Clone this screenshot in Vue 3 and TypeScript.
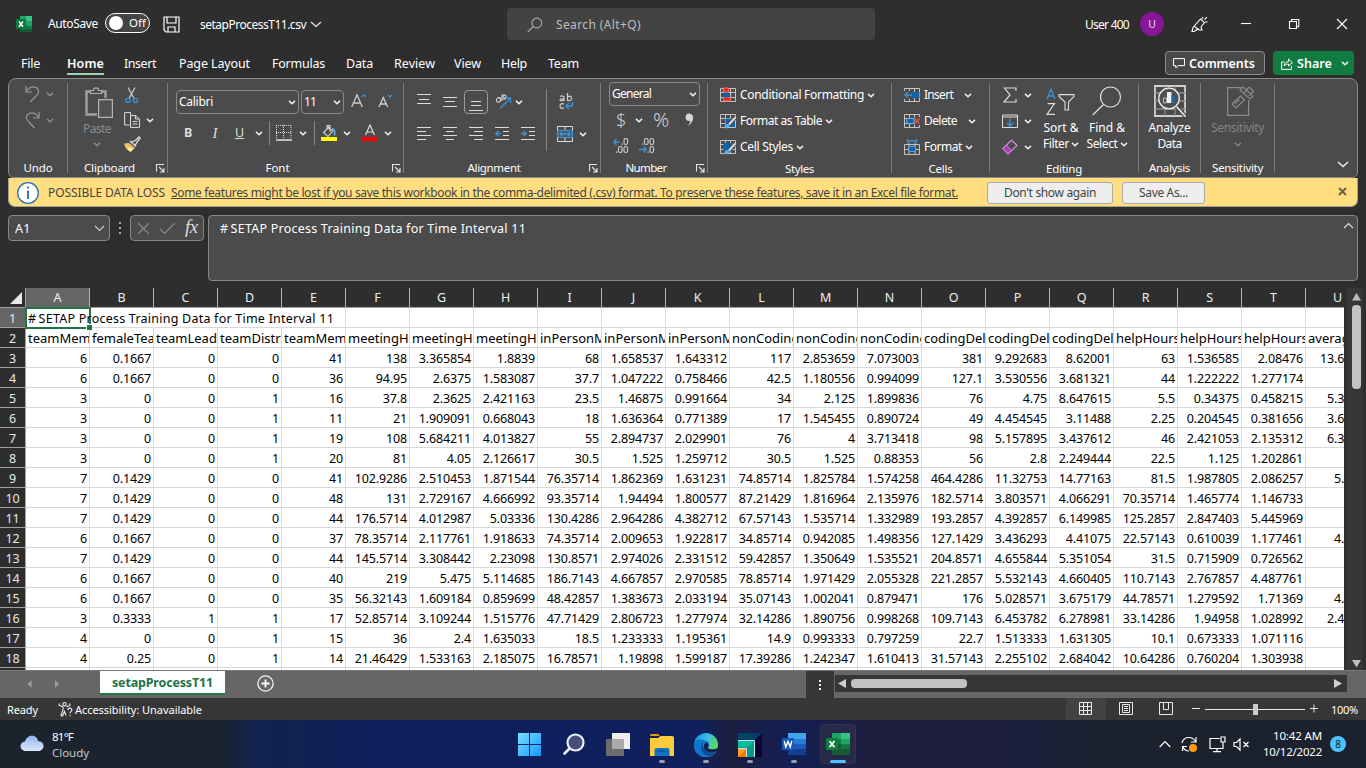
<script setup lang="ts">
import type { Directive } from 'vue'

// Tracks a label so that it fills the given width in pixels.
const vFit: Directive<HTMLElement, number> = {
  mounted(el, { value }) {
    el.style.letterSpacing = '0'
    const range = document.createRange()
    range.selectNodeContents(el)
    const width = range.getBoundingClientRect().width
    const count = (el.textContent ?? '').trim().length
    if (count > 0) el.style.letterSpacing = `${((value - width) / count).toFixed(3)}px`
  },
}

const tabs: { name: string; w: number; gap: number }[] = [
  { name: 'File', w: 19, gap: 21 },
  { name: 'Home', w: 37, gap: 27 },
  { name: 'Insert', w: 32, gap: 20 },
  { name: 'Page Layout', w: 71, gap: 23 },
  { name: 'Formulas', w: 53, gap: 22 },
  { name: 'Data', w: 27, gap: 21 },
  { name: 'Review', w: 41, gap: 21 },
  { name: 'View', w: 27, gap: 19 },
  { name: 'Help', w: 26, gap: 20 },
  { name: 'Team', w: 31, gap: 21 },
]

const columns = 'ABCDEFGHIJKLMNOPQRSTU'.split('')

const headings = [
  'teamMem', 'femaleTea', 'teamLead', 'teamDistr', 'teamMem', 'meetingH', 'meetingH', 'meetingH',
  'inPersonM', 'inPersonM', 'inPersonM', 'nonCoding', 'nonCoding', 'nonCoding', 'codingDel',
  'codingDel', 'codingDel', 'helpHours', 'helpHours', 'helpHours', 'averag',
]

const rows: string[][] = [
  '6 0.1667 0 0 41 138 3.365854 1.8839 68 1.658537 1.643312 117 2.853659 7.073003 381 9.292683 8.62001 63 1.536585 2.08476 13.6',
  '6 0.1667 0 0 36 94.95 2.6375 1.583087 37.7 1.047222 0.758466 42.5 1.180556 0.994099 127.1 3.530556 3.681321 44 1.222222 1.277174',
  '3 0 0 1 16 37.8 2.3625 2.421163 23.5 1.46875 0.991664 34 2.125 1.899836 76 4.75 8.647615 5.5 0.34375 0.458215 5.3',
  '3 0 0 1 11 21 1.909091 0.668043 18 1.636364 0.771389 17 1.545455 0.890724 49 4.454545 3.11488 2.25 0.204545 0.381656 3.6',
  '3 0 0 1 19 108 5.684211 4.013827 55 2.894737 2.029901 76 4 3.713418 98 5.157895 3.437612 46 2.421053 2.135312 6.3',
  '3 0 0 1 20 81 4.05 2.126617 30.5 1.525 1.259712 30.5 1.525 0.88353 56 2.8 2.249444 22.5 1.125 1.202861',
  '7 0.1429 0 0 41 102.9286 2.510453 1.871544 76.35714 1.862369 1.631231 74.85714 1.825784 1.574258 464.4286 11.32753 14.77163 81.5 1.987805 2.086257 5.',
  '7 0.1429 0 0 48 131 2.729167 4.666992 93.35714 1.94494 1.800577 87.21429 1.816964 2.135976 182.5714 3.803571 4.066291 70.35714 1.465774 1.146733',
  '7 0.1429 0 0 44 176.5714 4.012987 5.03336 130.4286 2.964286 4.382712 67.57143 1.535714 1.332989 193.2857 4.392857 6.149985 125.2857 2.847403 5.445969',
  '6 0.1667 0 0 37 78.35714 2.117761 1.918633 74.35714 2.009653 1.922817 34.85714 0.942085 1.498356 127.1429 3.436293 4.41075 22.57143 0.610039 1.177461 4.',
  '7 0.1429 0 0 44 145.5714 3.308442 2.23098 130.8571 2.974026 2.331512 59.42857 1.350649 1.535521 204.8571 4.655844 5.351054 31.5 0.715909 0.726562',
  '6 0.1667 0 0 40 219 5.475 5.114685 186.7143 4.667857 2.970585 78.85714 1.971429 2.055328 221.2857 5.532143 4.660405 110.7143 2.767857 4.487761',
  '6 0.1667 0 0 35 56.32143 1.609184 0.859699 48.42857 1.383673 2.033194 35.07143 1.002041 0.879471 176 5.028571 3.675179 44.78571 1.279592 1.71369 4.',
  '3 0.3333 1 1 17 52.85714 3.109244 1.515776 47.71429 2.806723 1.277974 32.14286 1.890756 0.998268 109.7143 6.453782 6.278981 33.14286 1.94958 1.028992 2.4',
  '4 0 0 1 15 36 2.4 1.635033 18.5 1.233333 1.195361 14.9 0.993333 0.797259 22.7 1.513333 1.631305 10.1 0.673333 1.071116',
  '4 0.25 0 1 14 21.46429 1.533163 2.185075 16.78571 1.19898 1.599187 17.39286 1.242347 1.610413 31.57143 2.255102 2.684042 10.64286 0.760204 1.303938',
].map((line) => line.split(' '))

// The last column runs past the right edge of the sheet, so its values start at a digit offset.
const lastColumnInset = (text: string): string => `${42 - 7 * text.length}px`
</script>

<template>
  <div class="desktop">
    <svg class="defs" width="0" height="0">
      <symbol id="chev" viewBox="0 0 8 5"><path d="M1 .9L4 3.700L7 .9" fill="none" stroke="currentColor" stroke-width="1.500" /></symbol>
      <symbol id="launch" viewBox="0 0 9 9"><path d="M.5 7.500V.5H8M3 3l4.500 4.500M8 4v4H4" fill="none" stroke="#e8e8e8" stroke-width="1.100" /></symbol>
      <symbol id="minigrid" viewBox="0 0 16 16"><path d="M.5 1.500h15v13H.5zM5.500 1.500v13M10.500 1.500v13M.5 5.500h15M.5 10.500h15" fill="none" stroke="#c4c4c4" /></symbol>
    </svg>

    <header class="title">
      <svg class="xl" viewBox="0 0 16 16"><path d="M4 0h6v5H4z" fill="#21a366" /><path d="M10 0h6v5h-6z" fill="#33c481" /><path d="M4 5h6v6H4z" fill="#107c41" /><path d="M10 5h6v5h-6z" fill="#21a366" /><path d="M4 10h12v6H4z" fill="#185c37" /><path d="M10 10h6v3h-6z" fill="#107c41" /><rect y="3" width="10" height="10" rx="1" fill="#0f7a40" /><path d="M3 5.500l4 5.200M7 5.500l-4 5.200" stroke="#fff" stroke-width="1.400" /></svg>
      <span v-fit="50" class="autosave">AutoSave</span>
      <span class="toggle"><i></i><span v-fit="17">Off</span></span>
      <svg class="save" viewBox="0 0 17 17"><path d="M1 1h15v15H3L1 14zM4 1v6h9V1M5 16v-5h7v5" fill="none" stroke="#fff" stroke-width="1.200" /></svg>
      <span v-fit="106" class="doc">setapProcessT11.csv</span>
      <svg class="docchev" viewBox="0 0 12 7"><path d="M1 1l5 4.500L11 1" fill="none" stroke="#eee" stroke-width="1.200" /></svg>
      <div class="search">
        <svg viewBox="0 0 16 16"><circle cx="9.800" cy="6" r="4.900" /><path d="M6.200 9.500L.8 15" /></svg>
        <span v-fit="85">Search (Alt+Q)</span>
      </div>
      <span v-fit="44" class="user">User 400</span>
      <span class="avatar">U</span>
      <svg class="pen" viewBox="0 0 17 17"><path d="M1 15.500l1-4L9.500 3l4 3.500L10 11l1 3H8.500L7 13l-4 2.500zM3.500 10.500l4 3M11 3l1-2M13.500 3.500L16 1.200M14 6h2.500" fill="none" stroke="#fff" stroke-width="1.100" /></svg>
      <svg class="win" viewBox="0 0 102 12"><path d="M0 5.500h10" /><path d="M48.500 3.500h7v7h-7zM50.500 3.500v-2h7.300v7.300h-2" /><path d="M96 1l10 10M106 1L96 11" /></svg>
    </header>

    <nav class="tabs">
      <span v-for="t in tabs" :key="t.name" class="tab" :class="{ on: t.name === 'Home' }" :style="{ width: t.w + 'px', marginLeft: t.gap + 'px' }"><span v-fit="t.w">{{ t.name }}</span></span>
      <div class="comments">
        <svg viewBox="0 0 12 11"><path d="M.5.600h11v7H5L2.800 10V7.600H.5z" fill="none" stroke="#fff" /></svg>
        <span v-fit="66">Comments</span>
      </div>
      <div class="share">
        <svg viewBox="0 0 12 12"><path d="M3.500 4H.6v7.400h9.800V8M3 8c.5-3 2-4.300 4.500-4.300V1L11.400 4.700 7.500 8V6C5.600 6 4.400 6.500 3 8z" fill="none" stroke="#fff" /></svg>
        <span v-fit="35">Share</span>
        <svg class="chev"><use href="#chev" /></svg>
      </div>
    </nav>

    <section class="ribbon">
      <div class="group undo">
        <div class="line dim"><svg class="i16" viewBox="0 0 16 18"><path d="M1 1v6h6M1 6.500C4 2.500 8 1 11 2.500c4 2 3 6 0 8.500l-6 6" fill="none" stroke="currentColor" stroke-width="1.200" /></svg><svg class="chev"><use href="#chev" /></svg></div>
        <div class="line dim"><svg class="i16" viewBox="0 0 16 18"><path d="M14 1v6H8M14 6.500C11 2.500 7 1 4 2.500c-4 2-3 6 0 8.500l5.500 6" fill="none" stroke="currentColor" stroke-width="1.200" /></svg><svg class="chev"><use href="#chev" /></svg></div>
        <div class="label"><span v-fit="29">Undo</span></div>
      </div><i class="sep"></i>

      <div class="group clip">
        <div class="cols">
          <div class="big paste">
            <svg width="28" height="31" viewBox="0 0 28 31"><path d="M12 27.500H1.500v-23H6M16 4.500h4.500V11" fill="none" stroke="#a0a0a0" stroke-width="2.400" /><path d="M5.500 6.500v-3h3C8.500 0 13.500 0 13.500 3.500h3v3z" fill="none" stroke="#b0b0b0" stroke-width="1.200" /><path d="M13.600 12.600h13.800v17.800H13.600z" fill="#525252" stroke="#b4b4b4" stroke-width="1.200" /></svg>
            <span v-fit="28">Paste</span><svg class="chev"><use href="#chev" /></svg>
          </div>
          <div class="side">
            <svg class="cut" width="14" height="17" viewBox="0 0 14 17"><path d="M3 .5l6 11M10 .5L4 11.500" stroke="#d0d0d0" stroke-width="1.200" /><g fill="none" stroke="#3c92d6" stroke-width="1.400"><circle cx="3" cy="13.500" r="2.100" /><circle cx="10.500" cy="13.500" r="2.100" /></g></svg>
            <div class="copyrow"><svg width="16" height="16" viewBox="0 0 16 16"><path d="M5.500 13H.6V.6h6v3" fill="none" stroke="#ddd" /><path d="M6.500 3.600h5l4 3.500v8.300h-9zM11.500 3.600V7h4M8.500 9.500h5M8.500 12h5" fill="none" stroke="#ddd" /></svg><svg class="chev"><use href="#chev" /></svg></div>
            <svg width="17" height="16" viewBox="0 0 17 16"><path d="M0 7.500L5 7l6 5-4.500 4C3.500 14.500 1 12 0 7.500z" fill="#efbe67" /><path d="M3 11l6 2-2.500 3z" fill="#fff1bf" /><path d="M6 5l6 5.500M7.500 6l4-1.500L15 1l1.200 1.300L13 6l-1.500 3" fill="none" stroke="#e5e5e5" stroke-width="1.300" /></svg>
          </div>
        </div>
        <div class="label wide"><span v-fit="51">Clipboard</span><svg class="launch"><use href="#launch" /></svg></div>
      </div><i class="sep"></i>

      <div class="group font">
        <div class="frow">
          <div class="combo w123"><span v-fit="34">Calibri</span><svg class="chev"><use href="#chev" /></svg></div>
          <div class="combo w43"><span v-fit="12">11</span><svg class="chev"><use href="#chev" /></svg></div>
          <svg class="grow" width="45" height="15" viewBox="0 0 45 15"><g fill="none" stroke="#d0d0d0" stroke-width="1.300"><path d="M.7 13L6 .8 11.300 13M2.600 9h6.800M28 13l4.300-9.500L36.600 13M29.700 10h5.200" /></g><path d="M11 2.800L13 .8l2 2M37 1l2 2 2-2" fill="none" stroke="#3c92d6" stroke-width="1.300" /></svg>
        </div>
        <div class="frow2">
          <b class="fb">B</b><i class="fi">I</i><u class="fu">U</u><svg class="chev c1"><use href="#chev" /></svg><i class="vs"></i>
          <svg class="bord" width="16" height="16" viewBox="0 0 16 16"><path d="M0 .5h16M0 7.500h16M.5 0v14M7.500 0v14M15 0v14" stroke="#ddd" stroke-dasharray="1 1" /><path d="M0 15h16" stroke="#fff" stroke-width="1.300" /></svg><svg class="chev c2"><use href="#chev" /></svg><i class="vs"></i>
          <svg class="buck" width="16" height="16" viewBox="0 0 16 16"><path d="M8 2L2.500 7.500 7 11.500 12 6 7.500 2M6 5V.6h3V7" fill="none" stroke="#d5d5d5" stroke-width="1.100" /><path d="M11 3.500c3 .5 3 4 2.500 7" fill="none" stroke="#5ea8e0" stroke-width="1.700" /><path d="M0 12h16v4H0z" fill="#ff0" /></svg><svg class="chev c3"><use href="#chev" /></svg>
          <svg class="fcol" width="16" height="16" viewBox="0 0 16 16"><path d="M3.500 10L8 0l4.500 10M5.200 7h5.600" fill="none" stroke="#ddd" stroke-width="1.200" /><path d="M0 12h16v4H0z" fill="#f00" /></svg><svg class="chev c3"><use href="#chev" /></svg>
        </div>
        <div class="label wide"><span v-fit="24">Font</span><svg class="launch"><use href="#launch" /></svg></div>
      </div><i class="sep"></i>

      <div class="group align">
        <div class="cols">
          <div class="al">
            <div class="arow">
              <svg width="14" height="24" viewBox="0 0 14 24"><path d="M0 4.500h14M2 9.500h10M0 13.500h14" /></svg>
              <svg width="14" height="24" viewBox="0 0 14 24"><path d="M0 7.500h14M2 11.500h10M0 16.500h14" /></svg>
              <span class="picked"><svg width="14" height="24" viewBox="0 0 14 24"><path d="M2 11.500h10M2 15.500h10M0 20.500h14" /></svg></span>
              <svg class="orient" width="17" height="17" viewBox="0 0 17 17"><g fill="none" stroke="#cfcfcf" stroke-width="1.200"><ellipse cx="3.500" cy="7" rx="2.300" ry="2" transform="rotate(-45 3.500 7)" /><path d="M4.500 4l3 4M6.500 1.500l4 5" /><ellipse cx="9" cy="4" rx="2.200" ry="2" transform="rotate(-45 9 4)" /></g><path d="M5 15.500L15 5.500M10.500 5h5v5" stroke="#3c92d6" stroke-width="1.400" fill="none" /></svg>
              <svg class="chev"><use href="#chev" /></svg>
            </div>
            <div class="arow two">
              <svg width="14" height="14" viewBox="0 0 14 14"><path d="M0 .5h14M0 4.500h9M0 8.500h14M0 12.500h9" /></svg>
              <svg width="14" height="14" viewBox="0 0 14 14"><path d="M0 .5h14M3 4.500h8M0 8.500h14M3 12.500h8" /></svg>
              <svg width="14" height="14" viewBox="0 0 14 14"><path d="M0 .5h14M5 4.500h9M0 8.500h14M5 12.500h9" /></svg>
              <svg width="14" height="14" viewBox="0 0 14 14"><path d="M0 .5h14M8 4.500h6M8 8.500h6M0 12.500h14" /><path d="M6 6.500H.8M3.500 4L.8 6.500 3.500 9" class="bl" /></svg>
              <svg width="14" height="14" viewBox="0 0 14 14"><path d="M0 .5h14M8 4.500h6M8 8.500h6M0 12.500h14" /><path d="M0 6.500h5.200M2.500 4l2.700 2.500L2.500 9" class="bl" /></svg>
            </div>
          </div>
          <i class="vs tall"></i>
          <div class="wraps">
            <svg width="16" height="17" viewBox="0 0 16 17"><g fill="none" stroke="#cfcfcf" stroke-width="1.200"><path d="M1 3.500C3 2.500 5 3 5 4.500V8M5 5.500C2 5.500 1 6 1 7s2 1.400 4-.5M8.500 0v8M8.500 4.500c1-2 4-2 4 .8S9.500 8.500 8.500 6.500M5 11.200C3 10 1 11 1 13s2 3 4 1.800" /></g><path d="M13.500 9v4H7.500M10 10l-3 3 3 3" class="bl" /></svg>
            <div class="mrow"><svg width="16" height="16" viewBox="0 0 16 16"><path d="M.5.500h15v15H.5zM8 0v4M8 12v4" /><path d="M.7 4.500h14.600v7H.7z" class="box" /><path d="M3 8h10M5 6L3 8l2 2M11 6l2 2-2 2" class="bl" /></svg><svg class="chev"><use href="#chev" /></svg></div>
          </div>
        </div>
        <div class="label wide"><span v-fit="53">Alignment</span><svg class="launch"><use href="#launch" /></svg></div>
      </div><i class="sep"></i>

      <div class="group num">
        <div class="combo w91"><span v-fit="39">General</span><svg class="chev"><use href="#chev" /></svg></div>
        <div class="nrow"><span class="dol">$</span><svg class="chev"><use href="#chev" /></svg><span class="pct">%</span><svg class="comma" width="9" height="14" viewBox="0 0 9 14"><path d="M4 .5c6 0 5.500 9-1.500 12.500C4.500 11 5 9.500 5 8 2 8.500.5 6.500.5 4.300S2 .5 4 .5z" fill="#d5d5d5" /></svg></div>
        <div class="drow">
          <svg width="16" height="17" viewBox="0 0 16 17"><path d="M6.500 5H.8M3.500 2L.8 5l2.700 3" class="bl" /><g class="zr"><rect x="11" y="1.500" width="3.600" height="6" rx="1.800" /><rect x="5.500" y="9.500" width="3.600" height="6" rx="1.800" /><rect x="11" y="9.500" width="3.600" height="6" rx="1.800" /></g><path d="M8.500 6.500h1.200v1.200H8.500zM3 14.500h1.200v1.200H3z" fill="#ddd" /></svg>
          <svg width="16" height="17" viewBox="0 0 16 17"><path d="M0 12.500h7.200M4.500 9.500l2.700 3-2.700 3" class="bl" /><g class="zr"><rect x="5.500" y="1.500" width="3.600" height="6" rx="1.800" /><rect x="11" y="1.500" width="3.600" height="6" rx="1.800" /><rect x="11" y="9.500" width="3.600" height="6" rx="1.800" /></g><path d="M3 6.500h1.200v1.200H3zM8.500 14.500h1.200v1.200H8.500z" fill="#ddd" /></svg>
        </div>
        <div class="label wide"><span v-fit="41">Number</span><svg class="launch"><use href="#launch" /></svg></div>
      </div><i class="sep"></i>

      <div class="group list">
        <div class="line"><svg class="ic" viewBox="0 0 16 16"><use href="#minigrid" /><path d="M3.500 1h5v4h-5zM3.500 10.500h7V14h-7z" fill="#e8261c" stroke="#ff6b62" /><path d="M4 5.500h4.500v5H4z" fill="#0f63ad" /></svg><span v-fit="124">Conditional Formatting</span><svg class="chev"><use href="#chev" /></svg></div>
        <div class="line"><svg class="ic" viewBox="0 0 16 16"><use href="#minigrid" /><path d="M5.500 5.500H15V14H5.500z" fill="#0f63ad" /><path d="M15.300 4.500L9 11.500" stroke="#4b4b4b" stroke-width="4" /><path d="M15.300 4.500L9 11.500" stroke="#ddd" stroke-width="2" /><path d="M3 14.500c2 0 2-3.500 4.500-3.500s2.500 3 0 4-3.500 0-4.500-.5z" fill="#5ab0f0" /></svg><span v-fit="82">Format as Table</span><svg class="chev"><use href="#chev" /></svg></div>
        <div class="line"><svg class="ic" viewBox="0 0 16 16"><use href="#minigrid" /><path d="M3.500 4h9v8h-9z" fill="#0f63ad" /><path d="M15.300 4.500L9 11.500" stroke="#4b4b4b" stroke-width="4" /><path d="M15.300 4.500L9 11.500" stroke="#ddd" stroke-width="2" /><path d="M3 14.500c2 0 2-3.500 4.500-3.500s2.500 3 0 4-3.500 0-4.500-.5z" fill="#5ab0f0" /></svg><span v-fit="53">Cell Styles</span><svg class="chev"><use href="#chev" /></svg></div>
        <div class="label"><span v-fit="29">Styles</span></div>
      </div><i class="sep"></i>

      <div class="group list cells">
        <div class="line"><svg class="ic" viewBox="0 0 16 16"><use href="#minigrid" /><path d="M6 5h9.500v6H6z" fill="#0f63ad" /><path d="M0 4h7v8H0z" fill="#4b4b4b" /><path d="M8 8H1M4 5L1 8l3 3" class="bl" /></svg><span v-fit="29">Insert</span><svg class="chev far"><use href="#chev" /></svg></div>
        <div class="line"><svg class="ic" viewBox="0 0 16 16"><use href="#minigrid" /><path d="M3 5.500h7v5H3z" fill="#0f63ad" stroke="#6ab0ea" /><path d="M10.500 4H16v8h-5.500z" fill="#4b4b4b" /><path d="M10.800 5.500l4.700 5M15.500 5.500l-4.700 5" stroke="#e05252" stroke-width="1.400" /></svg><span v-fit="33">Delete</span><svg class="chev far"><use href="#chev" /></svg></div>
        <div class="line"><svg class="ic" viewBox="0 0 16 16"><path d="M.5 5.500h15v10H.5zM5 4v12M11 4v12M.5 10.500h15" fill="none" stroke="#c4c4c4" /><path d="M5 7.500h6.500v5H5z" fill="#0f63ad" stroke="#4da3e6" /><path d="M3.500 0v4M12.500 0v4M3.500 2h9" class="bl" /></svg><span v-fit="38">Format</span><svg class="chev"><use href="#chev" /></svg></div>
        <div class="label"><span v-fit="24">Cells</span></div>
      </div><i class="sep"></i>

      <div class="group edit">
        <div class="cols">
          <div class="eside">
            <div class="line"><svg class="ic" viewBox="0 0 16 16"><path d="M14 4V1H2.500l5.500 7-6 7H14v-3" fill="none" stroke="#ddd" stroke-width="1.200" /></svg><svg class="chev"><use href="#chev" /></svg></div>
            <div class="line"><svg class="ic" viewBox="0 0 16 16"><path d="M.5 2h15v12.500H.5zM0 4h16" fill="none" stroke="#ddd" /><path d="M8 5.500V13M5 10l3 3 3-3" class="bl" /></svg><svg class="chev"><use href="#chev" /></svg></div>
            <div class="line"><svg class="ic" viewBox="0 0 16 16"><path d="M1 9.500L9.500 1 15 6.500 6 15z" fill="none" stroke="#d48fd8" stroke-width="1.200" /><path d="M1 9.500l3.500-3.300 5 5.300L6 15z" fill="#b435bd" stroke="#d48fd8" /></svg><svg class="chev"><use href="#chev" /></svg></div>
          </div>
          <div class="big sort">
            <svg width="30" height="28" viewBox="0 0 30 28"><path d="M1 11L5 1l4 10M2.500 8h5" fill="none" stroke="#3c92d6" stroke-width="1.300" /><path d="M1.500 15.600h7L1 26.400h8" fill="none" stroke="#ddd" stroke-width="1.200" /><path d="M13 6.600h15v1.800L22.500 14v8H19v-8L13 8.400z" fill="none" stroke="#ddd" stroke-width="1.100" /></svg>
            <span v-fit="35">Sort &amp;</span><span class="lc"><span v-fit="26">Filter</span><svg class="chev"><use href="#chev" /></svg></span>
          </div>
          <div class="big find">
            <svg width="30" height="30" viewBox="0 0 30 30"><circle cx="18.500" cy="11" r="10" fill="none" stroke="#ddd" stroke-width="1.200" /><path d="M11.500 18.500L.7 29" stroke="#ddd" stroke-width="1.300" /></svg>
            <span v-fit="36">Find &amp;</span><span class="lc"><span v-fit="31">Select</span><svg class="chev"><use href="#chev" /></svg></span>
          </div>
        </div>
        <div class="label"><span v-fit="36">Editing</span></div>
      </div><i class="sep"></i>

      <div class="group one">
        <div class="big">
          <svg width="32" height="32" viewBox="0 0 32 32"><path d="M1 1h30v30H1z" fill="none" stroke="#d0d0d0" stroke-width="1.800" /><path d="M1 8h30M1 16h30M1 24h30M11 1v30M21 1v30" stroke="#8a8a8a" stroke-width="1.300" /><circle cx="15" cy="13.500" r="10.300" fill="#505050" stroke="#eee" stroke-width="1.300" /><path d="M22.500 21.500L31 31" stroke="#4b4b4b" stroke-width="4" /><path d="M22.500 21.500L31 31" stroke="#eee" stroke-width="1.600" /><path d="M9.500 13h3v5h-3z" fill="none" stroke="#bbb" /><path d="M13 7h4.500v11H13z" fill="#f0f0f0" /><path d="M17.500 10h3v8h-3z" fill="#1668b0" /></svg>
          <span v-fit="42">Analyze</span><span v-fit="24">Data</span>
        </div>
        <div class="label"><span v-fit="41">Analysis</span></div>
      </div><i class="sep"></i>

      <div class="group one sens">
        <div class="big">
          <svg width="28" height="32" viewBox="0 0 28 32"><g fill="none" stroke="#8b8b8b" stroke-width="1.200"><path d="M14 2.600H.6v27.800h21V15" /><path d="M5 19l8.500-8 4 4L9 23zM8 18.500l4.500-4M13 5l3-3 10 9-3 3zM17.500 7.500L22 2l4.500 4L22 11" /></g></svg>
          <span v-fit="53">Sensitivity</span><svg class="chev"><use href="#chev" /></svg>
        </div>
        <div class="label"><span v-fit="51">Sensitivity</span></div>
      </div><i class="sep"></i>
      <svg class="fold" viewBox="0 0 12 7"><path d="M1 1l5 4.500L11 1" fill="none" stroke="#eee" stroke-width="1.400" /></svg>
    </section>

    <section class="message">
      <svg class="info" viewBox="0 0 22 22"><circle cx="11" cy="11" r="10.300" fill="#fff" stroke="#2b6cb8" stroke-width="1.300" /><path d="M11 8.500V17M11 4.500v2" stroke="#1c5fae" stroke-width="1.700" /></svg>
      <span v-fit="117" class="loss">POSSIBLE DATA LOSS</span>
      <u v-fit="787" class="why">Some features might be lost if you save this workbook in the comma-delimited (.csv) format. To preserve these features, save it in an Excel file format.</u>
      <button class="dont"><span v-fit="92">Don't show again</span></button>
      <button class="saveas"><span v-fit="49">Save As...</span></button>
      <svg class="close" viewBox="0 0 9 9"><path d="M1 1l7 7M8 1L1 8" stroke="#6b6149" stroke-width="2" /></svg>
    </section>

    <section class="formula">
      <div class="namebox"><span v-fit="15.5">A1</span><svg viewBox="0 0 11 7"><path d="M1 1l4.500 4.500L10 1" fill="none" stroke="#ccc" stroke-width="1.200" /></svg></div>
      <div class="dots"><i></i><i></i><i></i></div>
      <div class="fx"><svg width="40" height="13" viewBox="0 0 40 13"><path d="M1 1l11 11M12 1L1 12M23 7l4.500 4.500L38 1" fill="none" stroke="#888" stroke-width="1.200" /></svg><em>fx</em></div>
      <div class="input"><span v-fit="306">#&#8201;SETAP Process Training Data for Time Interval 11</span><svg viewBox="0 0 11 7"><path d="M1 6l4.500-4.500L10 6" fill="none" stroke="#ddd" stroke-width="1.200" /></svg></div>
    </section>

    <section class="sheet">
      <div class="grid">
        <div class="row head"><span class="rh corner"><svg width="12" height="12"><path d="M12 0v12H0z" fill="#e8e8e8" /></svg></span><span v-for="c in columns" :key="c" class="ch" :class="{ sel: c === 'A' }">{{ c }}</span></div>
        <div class="row first"><span class="rh sel">1</span><span class="cell active"><span v-fit="306" class="spill">#&#8201;SETAP Process Training Data for Time Interval 11</span><i class="handle"></i></span><span v-for="n in 20" :key="n" class="cell" :class="{ merged: n < 4 }"></span></div>
        <div class="row"><span class="rh">2</span><span v-for="(h, i) in headings" :key="i" class="cell text heading">{{ h }}</span></div>
        <div v-for="(r, ri) in rows" :key="ri" class="row">
          <span class="rh">{{ ri + 3 }}</span>
          <span v-for="i in 20" :key="i" class="cell">{{ r[i - 1] }}</span>
          <span class="cell text" :style="{ paddingLeft: lastColumnInset(r[20] ?? '') }">{{ r[20] }}</span>
        </div>
        <div class="row"><span class="rh"></span><span v-for="n in 21" :key="n" class="cell"></span></div>
      </div>
      <div class="vscroll"><svg width="9" height="8"><path d="M4.500 0L9 7.500H0z" fill="#bdbdbd" /></svg><i></i><svg width="9" height="8"><path d="M0 0h9L4.500 7.500z" fill="#bdbdbd" /></svg></div>
    </section>

    <section class="sheets">
      <svg class="navs" width="33" height="8"><path d="M4.500 0v8L.5 4zM28 0v8l4-4z" fill="#9d9d9d" /></svg>
      <span class="sheettab"><span v-fit="101">setapProcessT11</span></span>
      <svg class="plus" viewBox="0 0 17 17"><circle cx="8.500" cy="8.500" r="7.600" fill="none" stroke="#f2f2f2" stroke-width="1.300" /><path d="M8.500 4.500v8M4.500 8.500h8" stroke="#fff" stroke-width="1.800" /></svg>
      <div class="grip"><i></i><i></i><i></i></div>
      <div class="hscroll"><svg width="8" height="9"><path d="M8 0v9L0 4.500z" fill="#d0d0d0" /></svg><i></i><svg width="8" height="9"><path d="M0 0v9l8-4.500z" fill="#d0d0d0" /></svg></div>
    </section>

    <footer class="status">
      <span v-fit="31" class="ready">Ready</span>
      <svg class="acc" viewBox="0 0 15 15"><g fill="none" stroke="#eee" stroke-width="1.100"><circle cx="6.500" cy="2.200" r="1.700" /><path d="M.8 3L5 5v3l-2 5.500 1.500.5 2-4.500 1.500 4M12.200 3L8.500 5M.8 3l.8-1.500M12.200 3l-.8-1.500M10 8c0-2.500 4-2.500 3.800 0 0 1.500-1.800 1.500-1.800 3.500M12 13v1.300" /></g></svg>
      <span v-fit="127" class="access">Accessibility: Unavailable</span>
      <span class="view"><svg width="14" height="14" viewBox="0 0 14 14"><path d="M.5.500h12v12H.5zM4.500.500v12M8.500.500v12M.5 4.500h12M.5 8.500h12" /></svg></span>
      <svg class="v2" width="14" height="14" viewBox="0 0 14 14"><path d="M.5.500h13v12H.5zM3.500 2.500h7v8h-7zM5 4.500h4M5 6.500h4M5 8.500h4" /></svg>
      <svg class="v3" width="14" height="14" viewBox="0 0 14 14"><path d="M.5.500h13v12H.5zM4.500.500v7M9.500.500v7M4.500 7.500h5" /></svg>
      <svg class="zoom" width="120" height="12" viewBox="0 0 120 12"><path d="M0 5.500h8M13 6.500h100M118 5.500h8M122 1.500v8" /><path d="M61 1h5v11h-5z" fill="#ccc" stroke="none" /></svg>
      <span v-fit="27" class="percent">100%</span>
    </footer>

    <footer class="taskbar">
      <svg class="cloud" viewBox="0 0 24 17"><defs><linearGradient id="cl" x2="0" y2="1"><stop stop-color="#8fb5f3" /><stop offset="1" stop-color="#dceafb" /></linearGradient></defs><path d="M5 16C-1 15-1 7 5 6.500 7-1 17-1 18 6c7 0 7.500 9 1 10z" fill="url(#cl)" /></svg>
      <div class="weather"><span v-fit="21">81°F</span><span v-fit="37" class="soft">Cloudy</span></div>
      <svg class="start" viewBox="0 0 23 23"><defs><linearGradient id="ws" x2="1" y2="1"><stop stop-color="#7bdcff" /><stop offset="1" stop-color="#129cff" /></linearGradient></defs><path d="M0 0h11v11H0zM12 0h11v11H12zM0 12h11v11H0zM12 12h11v11H12z" fill="url(#ws)" /></svg>
      <svg class="find2" viewBox="0 0 22 22"><circle cx="12.500" cy="9.500" r="8" fill="#454e7d" stroke="#eee" stroke-width="2.200" /><path d="M6.500 15.500L1.500 20.500" stroke="#eee" stroke-width="2.600" stroke-linecap="round" /></svg>
      <svg class="tv" viewBox="0 0 24 23"><path d="M6 0h18v16H6z" fill="#eee" /><path d="M0 6h18v17H0z" fill="#6c6c6c" /><path d="M6 6h12v10H6z" fill="#aaa" /></svg>
      <div class="app"><svg width="24" height="23" viewBox="0 0 24 23"><path d="M0 2.500Q0 1 1.500 1H8l2 2H0z" fill="#e59c00" /><path d="M0 5h8l2.500-2H22q2 0 2 2v18H0z" fill="#ffcb3d" /><path d="M4.500 23v-6q0-2 2-2h11q2 0 2 2v6z" fill="#0f72c4" /><path d="M7 17.500h10v1.500H7z" fill="#075797" /></svg><i></i></div>
      <div class="app"><svg width="24" height="24" viewBox="0 0 24 24"><defs><linearGradient id="eg" x2="1" y2=".5"><stop stop-color="#1687d9" /><stop offset=".5" stop-color="#35bce9" /><stop offset="1" stop-color="#63dd4a" /></linearGradient></defs><circle cx="12" cy="12" r="12" fill="url(#eg)" /><path d="M0 11C1 6 6 6 10 7c4 1 5 3 5 5 0-2-5-4-6 0-1 5 4 9 12 7-2 4-6 5-9 5C5 24-1 18 0 11z" fill="#0c75cc" /><path d="M8 11c-3 6 2 13 8 12 3-1 5-3 6-5-6 3-13 0-13-5q0-2 1-3z" fill="#0d4e9c" /><path d="M12 9.500c2.500 0 4 2.500 2 5 0 2 6 2.500 10 .5l-1.500 3.500c-6 2-12.500 0-13-4.500 0-2.500 1-4.300 2.500-4.500z" fill="#112155" /></svg><i></i></div>
      <div class="app"><svg width="24" height="24" viewBox="0 0 24 24"><path d="M0 0h24v24H0z" fill="#0b0437" /><path d="M0 0h24l-7 7H0z" fill="#003f68" /><path d="M0 8h16v16H0z" fill="#079c86" /><path d="M0 8h16l-6 6H0z" fill="#00bf9d" /><path d="M0 7.500h16.500V24M0 15.500h8.500V24" fill="none" stroke="#cce9e5" /><path d="M0 16h8v8H0z" fill="#f57b00" /><path d="M0 16h8l-8 8z" fill="#ff9e2a" /></svg><i></i></div>
      <div class="app"><svg width="24" height="22" viewBox="0 0 24 22"><path d="M6 0h18v22H6z" fill="#185abd" /><path d="M6 0h18v6H6z" fill="#41a5ee" /><path d="M6 6h18v5H6z" fill="#2b7cd3" /><path d="M6 16h18v6H6z" fill="#103f91" /><rect y="5" width="12" height="12" rx="1" fill="#1857b8" /><path d="M2.200 8l1.600 6L6 8.500 8.200 14l1.600-6" fill="none" stroke="#fff" stroke-width="1.400" /></svg><i></i></div>
      <div class="app current"><svg width="24" height="22" viewBox="0 0 24 22"><path d="M6 0h9v6H6z" fill="#21a366" /><path d="M15 0h9v6h-9z" fill="#33c481" /><path d="M6 6h9v6H6z" fill="#107c41" /><path d="M15 6h9v6h-9z" fill="#21a366" /><path d="M6 11h18v11H6z" fill="#185c37" /><path d="M15 11h9v5h-9z" fill="#107c41" /><rect y="5" width="12" height="12" rx="1" fill="#107c41" /><path d="M3.500 8l5 6.200M8.500 8l-5 6.200" stroke="#fff" stroke-width="1.600" /></svg><i></i></div>
      <svg class="up" viewBox="0 0 12 8"><path d="M.7 7L6 1.500 11.300 7" /></svg>
      <svg class="sync" viewBox="0 0 17 17"><path d="M1 7C2 3 5 1.500 8 1.500c3 0 5 1.500 6.500 4M15 1v5h-5M1.500 15v-4.500H6M2 11c1 2.500 3 4 6 4" /><circle cx="12" cy="12" r="4" fill="#ff9b0d" stroke="none" /></svg>
      <svg class="net" viewBox="0 0 17 17"><path d="M10.500 2.500H1v10h13V8M8 12.500V16M4 15.700h8M12 1h4v5h-4zM14 6v6" /></svg>
      <svg class="mute" viewBox="0 0 17 13"><path d="M1 4.500h2.500L7 1v11L3.500 8.500H1zM10.500 4l5 5M15.500 4l-5 5" /></svg>
      <div class="clock"><span v-fit="49">10:42 AM</span><span v-fit="59">10/12/2022</span></div>
      <span class="badge">8</span>
    </footer>
  </div>
</template>

<style>
html, body { margin: 0; overflow: hidden; background: #2e2e2e; }
</style>

<style scoped>
.desktop { width: 1366px; height: 768px; overflow: hidden; background: #2e2e2e; color: #fff; font: 12px/16px "Noto Sans", "Open Sans", sans-serif; white-space: nowrap; display: flex; flex-direction: column; }
.desktop * { box-sizing: border-box; }
.defs { display: block; flex: none; height: 0; }
svg { flex: none; display: block; overflow: visible; }
.chev { width: 8px; height: 5px; color: #f0f0f0; }

.title { height: 48px; display: flex; align-items: center; flex: none; }
.title > * { flex: none; }
.xl { width: 16px; height: 16px; margin-left: 16px; }
.autosave { margin-left: 16px; width: 50px; }
.toggle { width: 45px; height: 20px; margin: -2px 0 0 7px; border: 1px solid #fff; border-radius: 10px; background: #444; display: flex; align-items: center; font-size: 11.5px; }
.toggle i { width: 14px; height: 14px; border-radius: 7px; background: #fff; margin: 0 6px 0 3px; }
.save { width: 17px; height: 17px; margin-left: 13px; }
.doc { margin: 2px 0 0 20px; width: 106px; }
.docchev { width: 12px; height: 7px; margin-left: 4px; }
.search { width: 368px; height: 32px; margin-left: 185px; border-radius: 4px; background: #434343; display: flex; align-items: center; color: #bdbdbd; padding-top: 1px; }
.search svg { width: 16px; height: 16px; margin: 0 13px 0 20px; fill: none; stroke: #aaa; stroke-width: 1.1; }
.user { width: 43px; margin: 1px 0 0 210px; }
.avatar { width: 24px; height: 24px; border-radius: 12px; background: #881798; margin-left: 12px; text-align: center; line-height: 24px; font-size: 10.5px; color: #e8d0ec; }
.pen { width: 17px; height: 17px; margin-left: 27px; }
.win { width: 102px; height: 12px; margin-left: 33px; fill: none; stroke: #fff; stroke-width: 1.1; }

.tabs { height: 30px; display: flex; flex: none; font-size: 12.5px; align-items: flex-start; }
.tab { height: 27px; padding-top: 8px; }
.tab.on { font-weight: 600; border-bottom: 2px solid #9fd5b7; }
.comments { width: 100px; height: 24px; margin: 3px 0 0 auto; border: 1px solid #8c8c8c; border-radius: 4px; background: #484848; display: flex; align-items: center; font-weight: 600; padding: 1px 0 0 7px; }
.comments svg { width: 12px; height: 11px; margin-right: 4px; }
.share { width: 81px; height: 24px; margin: 3px 12px 0 8px; border-radius: 4px; background: #107c41; display: flex; align-items: center; font-weight: 600; padding: 1px 0 0 8px; }
.share svg:first-child { width: 12px; height: 12px; margin-right: 4px; }
.share .chev { margin-left: 9px; }

.ribbon { height: 100px; margin: 0 8px; border: 1px solid #8a8a8a; border-radius: 8px 8px 6px 6px; background: #4b4b4b; display: flex; flex: none; }
.sep { width: 1px; height: 90px; margin-top: 4px; background: #7d7d7d; flex: none; }
.group { display: flex; flex-direction: column; height: 98px; flex: none; }
.label { margin-top: auto; height: 18px; display: flex; justify-content: center; align-items: center; font-size: 11.5px; position: relative; }
.wide { padding-right: 16px; }
.list .label, .edit .label { height: 17px; }
.launch { position: absolute; right: 2px; top: 5px; width: 9px; height: 9px; }
.cols { display: flex; }
.line { display: flex; align-items: center; height: 26px; flex: none; }
.dim { color: #999; }
.dim .chev { color: #8a8a8a; }
.undo { width: 58px; padding-top: 2px; }
.undo .i16 { width: 16px; height: 18px; margin: 0 5px 0 16px; }
.clip { width: 99px; }
.big { display: flex; flex-direction: column; align-items: center; }
.paste { width: 58px; padding-top: 8px; color: #8a8a8a; }
.paste span { margin-top: 3px; }
.paste .chev { margin-top: 5px; color: #888; }
.paste > svg:first-child { margin-left: 4px; }
.side { display: flex; flex-direction: column; padding: 8px 0 0; gap: 8px; margin-left: -2px; }
.cut { margin-left: 1px; }
.copyrow { display: flex; align-items: center; gap: 6px; }
.font { width: 235px; }
.frow { display: flex; margin: 11px 0 0 8px; }
.combo { height: 24px; border: 1px solid #8a8a8a; border-radius: 4px; display: flex; align-items: center; justify-content: space-between; padding: 0 2px; }
.w123 { width: 123px; margin-right: 2px; }
.w43 { width: 43px; }
.grow { margin: 4px 0 0 7px; }
.frow2 { display: flex; align-items: center; height: 24px; margin: 7px 0 0 16px; color: #ddd; font-size: 12.5px; }
.fb { width: 10px; }
.fi { width: 10px; margin-left: 16px; text-align: center; font-family: "Liberation Serif", serif; font-size: 15px; }
.fu { width: 10px; margin-left: 15px; }
.c1 { margin: 0 6px 0 10px; }
.vs { width: 1px; height: 24px; background: #858585; flex: none; }
.bord { margin-left: 6px; }
.c2 { margin: 0 7px 0 7px; }
.buck { margin-left: 6px; }
.c3 { margin: 0 11px 0 6px; }
.align { width: 196px; }
.al { width: 142px; }
.arow { display: flex; height: 24px; margin: 11px 0 0 13px; gap: 12px; }
.arow.two { margin-top: 12px; padding-top: 1px; }
.arow svg, .wraps svg { stroke: #ddd; fill: none; }
.picked { width: 24px; height: 24px; border: 1px solid #9a9a9a; border-radius: 4px; margin: 0 -5px; padding: 0 4px; }
.picked svg { margin-top: -1px; }
.arow .orient { margin-top: 3px; }
.arow .chev, .wraps .chev { stroke: none; }
.arow .chev { margin: 10px 0 0 -9px; }
.bl { stroke: #3c92d6; stroke-width: 1.4; fill: none; }
.box { stroke: #3c92d6; stroke-width: 1.2; fill: #445a6d; }
.tall { height: 62px; margin-top: 10px; }
.wraps { padding: 14px 0 0 12px; }
.mrow { display: flex; align-items: center; gap: 6px; margin-top: 16px; margin-left: -2px; }
.num { width: 106px; }
.w91 { width: 91px; margin: 3px 0 0 8px; }
.nrow { display: flex; align-items: center; height: 26px; margin: 1px 0 0 15px; color: #d0d0d0; font-size: 18px; line-height: 24px; font-weight: 300; }
.dol { width: 10px; font-size: 18px; }
.nrow .chev { margin: 0 10px 0 9px; }
.pct { width: 18px; font-size: 20px; }
.comma { margin-left: 14px; }
.drow { display: flex; gap: 10px; margin: 4px 0 0 12px; }
.zr { fill: none; stroke: #d0d0d0; stroke-width: 1.1; }
.list { width: 183px; padding-top: 3px; }
.ic { width: 16px; height: 16px; margin: 0 4px 0 12px; }
.list .chev { margin-left: 3px; }
.cells { width: 97px; }
.cells .chev.far { margin-left: 11px; }
.edit { width: 148px; }
.edit .cols { height: 80px; }
.eside { width: 48px; padding-top: 3px; }
.eside .chev { margin-left: 2px; }
.sort { width: 46px; padding-top: 9px; }
.sort > svg { margin-bottom: 4px; }
.find { width: 46px; padding-top: 7px; }
.find > svg { margin-bottom: 4px; }
.lc { display: flex; align-items: center; gap: 2px; }
.one { width: 61px; }
.one .big { padding-top: 6px; }
.one .big > svg:first-child { margin-bottom: 3px; }
.sens { width: 73px; }
.sens .big { color: #848484; }
.sens .big > svg:first-child { margin-left: 6px; }
.sens .big .chev { color: #848484; margin-top: 6px; }
.fold { width: 12px; height: 7px; margin: 82px 0 0 62px; }

.message { height: 29px; margin: 0 8px; padding-top: 1px; background: #ffde80; border: 1px solid #a5a08c; border-top: 0; border-radius: 0 0 7px 7px; display: flex; align-items: center; flex: none; color: #444; }
.message > * { flex: none; }
.info { width: 22px; height: 22px; margin-left: 8px; }
.loss { width: 117px; margin-left: 9px; }
.why { width: 787px; margin-left: 6px; }
.message button { height: 22px; border: 1px solid #aaa; border-radius: 3px; background: #eee; color: #444; padding: 0; font: inherit; }
.dont { width: 126px; margin-left: 29px; }
.saveas { width: 83px; margin-left: 9px; }
.close { width: 9px; height: 9px; margin: -2px 10px 0 auto; }

.formula { height: 81px; padding: 8px 8px 0; display: flex; flex: none; font-size: 12.5px; }
.namebox, .fx { height: 26px; border: 1px solid #858585; border-radius: 4px; background: #4b4b4b; display: flex; align-items: center; }
.namebox { width: 102px; justify-content: space-between; padding: 1px 4px 0 6px; }
.namebox svg { width: 11px; height: 7px; }
.dots { width: 20px; height: 26px; display: flex; flex-direction: column; gap: 3px; align-items: center; justify-content: center; }
.dots i { width: 2px; height: 2px; background: #aaa; }
.fx { width: 74px; padding-left: 6px; }
.fx em { margin: -2px 0 0 8px; font: italic 19px/22px "Liberation Serif", serif; color: #ddd; letter-spacing: -0.5px; }
.input { flex: 1; height: 66px; margin-left: 4px; border: 1px solid #858585; border-radius: 4px; background: #4b4b4b; display: flex; justify-content: space-between; padding: 5px 3px 0 11px; }
.input svg { width: 11px; height: 7px; margin-top: 1px; }

.sheet { height: 382px; display: flex; flex: none; }
.grid { width: 1344px; height: 382px; overflow: hidden; background: #fff; font-size: 12.5px; letter-spacing: -0.15px; color: #000; }
.row { display: flex; height: 20px; width: 1370px; }
.rh { width: 26px; flex: none; background: #2e2e2e; color: #e8e8e8; border-right: 1px solid #a0a0a0; border-bottom: 1px solid #a0a0a0; text-align: center; line-height: 21px; }
.rh.sel, .ch.sel { background: #666; }
.head { background: #2e2e2e; }
.ch { width: 64px; flex: none; color: #eee; text-align: center; line-height: 20px; border-right: 1px solid #b5b5b5; border-bottom: 1px solid #a0a0a0; }
.corner { border-bottom-color: #a0a0a0; padding: 4px 0 0 10px; }
.cell { width: 64px; flex: none; border-right: 1px solid #d9d9d9; border-bottom: 1px solid #d9d9d9; text-align: right; line-height: 21px; padding-right: 2px; overflow: hidden; }
.cell.text { text-align: left; padding: 0 0 0 2px; }
.cell.heading { font-size: 13px; letter-spacing: 0; }
.cell.merged { border-right-color: transparent; }
.cell.active { overflow: visible; position: relative; text-align: left; padding: 0 0 0 2px; }
.cell.active::before { content: ""; position: absolute; inset: -1px -2px -2px -1px; border: 2px solid #217346; }
.spill { position: relative; }
.handle { position: absolute; right: -3px; bottom: -3px; width: 6px; height: 6px; background: #217346; border: solid #fff; border-width: 1px 0 0 1px; }
.vscroll { width: 22px; display: flex; flex-direction: column; align-items: center; background: #363636; border-left: 2px solid #2e2e2e; border-right: 3px solid #2e2e2e; padding: 5px 0 2px 3px; }
.vscroll i { width: 9px; height: 84px; margin-top: 4px; border-radius: 4px; background: #c2c2c2; }
.vscroll svg:last-child { margin-top: auto; }

.sheets { height: 28px; display: flex; flex: none; background: #666; border-top: 1px solid #777; }
.navs { margin: 9px 0 0 27px; }
.sheettab { width: 125px; height: 24px; margin-left: 40px; background: #fff; border-bottom: 2px solid #217346; color: #217346; font-weight: 700; font-size: 12.5px; line-height: 24px; padding-left: 12px; }
.plus { width: 17px; height: 17px; margin: 4px 0 0 32px; }
.grip { width: 28px; margin-left: 532px; height: 27px; background: #363636; display: flex; flex-direction: column; align-items: center; justify-content: center; gap: 2px; }
.grip i { width: 2px; height: 2px; background: #eee; }
.hscroll { width: 512px; height: 17px; margin: 4px 0 0 1px; background: #363636; display: flex; align-items: center; padding: 0 5px 0 3px; }
.hscroll i { width: 116px; height: 9px; border-radius: 4px; background: #c2c2c2; margin-left: 5px; }
.hscroll svg:last-child { margin-left: auto; }

.status { height: 22px; display: flex; align-items: center; flex: none; background: #363636; font-size: 11px; line-height: 18px; }
.status > * { flex: none; }
.ready, .access, .percent { padding-top: 2px; }
.ready { width: 31px; margin-left: 7px; }
.acc { width: 15px; height: 15px; margin-left: 20px; }
.access { width: 127px; margin-left: 2px; }
.view { width: 40px; height: 22px; margin-left: 864px; background: #424242; padding: 4px 0 0 13px; }
.status svg { fill: none; stroke: #e8e8e8; }
.v2 { margin-left: 13px; }
.v3 { margin-left: 26px; }
.zoom { margin-left: 19px; }
.percent { margin-left: 19px; width: 27px; }

.taskbar { height: 48px; display: flex; flex: none; align-items: center; background: linear-gradient(90deg, #1c232d 0, #1c232f 220px, #11234e 255px, #101f5c 370px, #0f205d 700px, #1c1e40 730px, #121f55 790px, #1e1e3d 870px, #1c1f3d 1020px, #1b222d 1120px, #1b222d 100%); }
.taskbar > * { flex: none; }
.cloud { width: 24px; height: 17px; margin: -2px 0 0 20px; }
.weather { width: 50px; margin-left: 8px; display: flex; flex-direction: column; font-size: 11.5px; margin-top: 2px; }
.soft { color: #c5c8cf; }
.start { width: 23px; height: 23px; margin-left: 416px; margin-top: 1px; }
.find2 { width: 22px; height: 22px; margin-left: 22px; }
.tv { width: 24px; height: 23px; margin: 1px 0 0 21px; }
.app { width: 36px; height: 44px; margin-left: 8px; display: flex; flex-direction: column; align-items: center; justify-content: space-between; padding: 11px 0 3px; }
.app i { width: 6px; height: 3px; border-radius: 2px; background: #9a9eae; }
.tv + .app { margin-left: 14px; }
.current { height: 40px; border: 1px solid #343554; border-radius: 4px; background: #29294a; padding: 8px 0 0; }
.current i { width: 16px; background: #4cc2ff; }
.up { width: 12px; height: 8px; margin-left: 303px; }
.up, .sync, .net, .mute { fill: none; stroke: #fff; stroke-width: 1.2; }
.sync { width: 17px; height: 17px; margin-left: 10px; }
.net { width: 17px; height: 17px; margin-left: 11px; }
.mute { width: 17px; height: 13px; margin-left: 7px; }
.clock { width: 61px; margin-left: 11px; display: flex; flex-direction: column; align-items: flex-end; font-size: 11.5px; }
.badge { width: 16px; height: 16px; border-radius: 8px; margin-left: 8px; background: #4cc2ff; color: #123; font-size: 10px; line-height: 16px; text-align: center; }
</style>
